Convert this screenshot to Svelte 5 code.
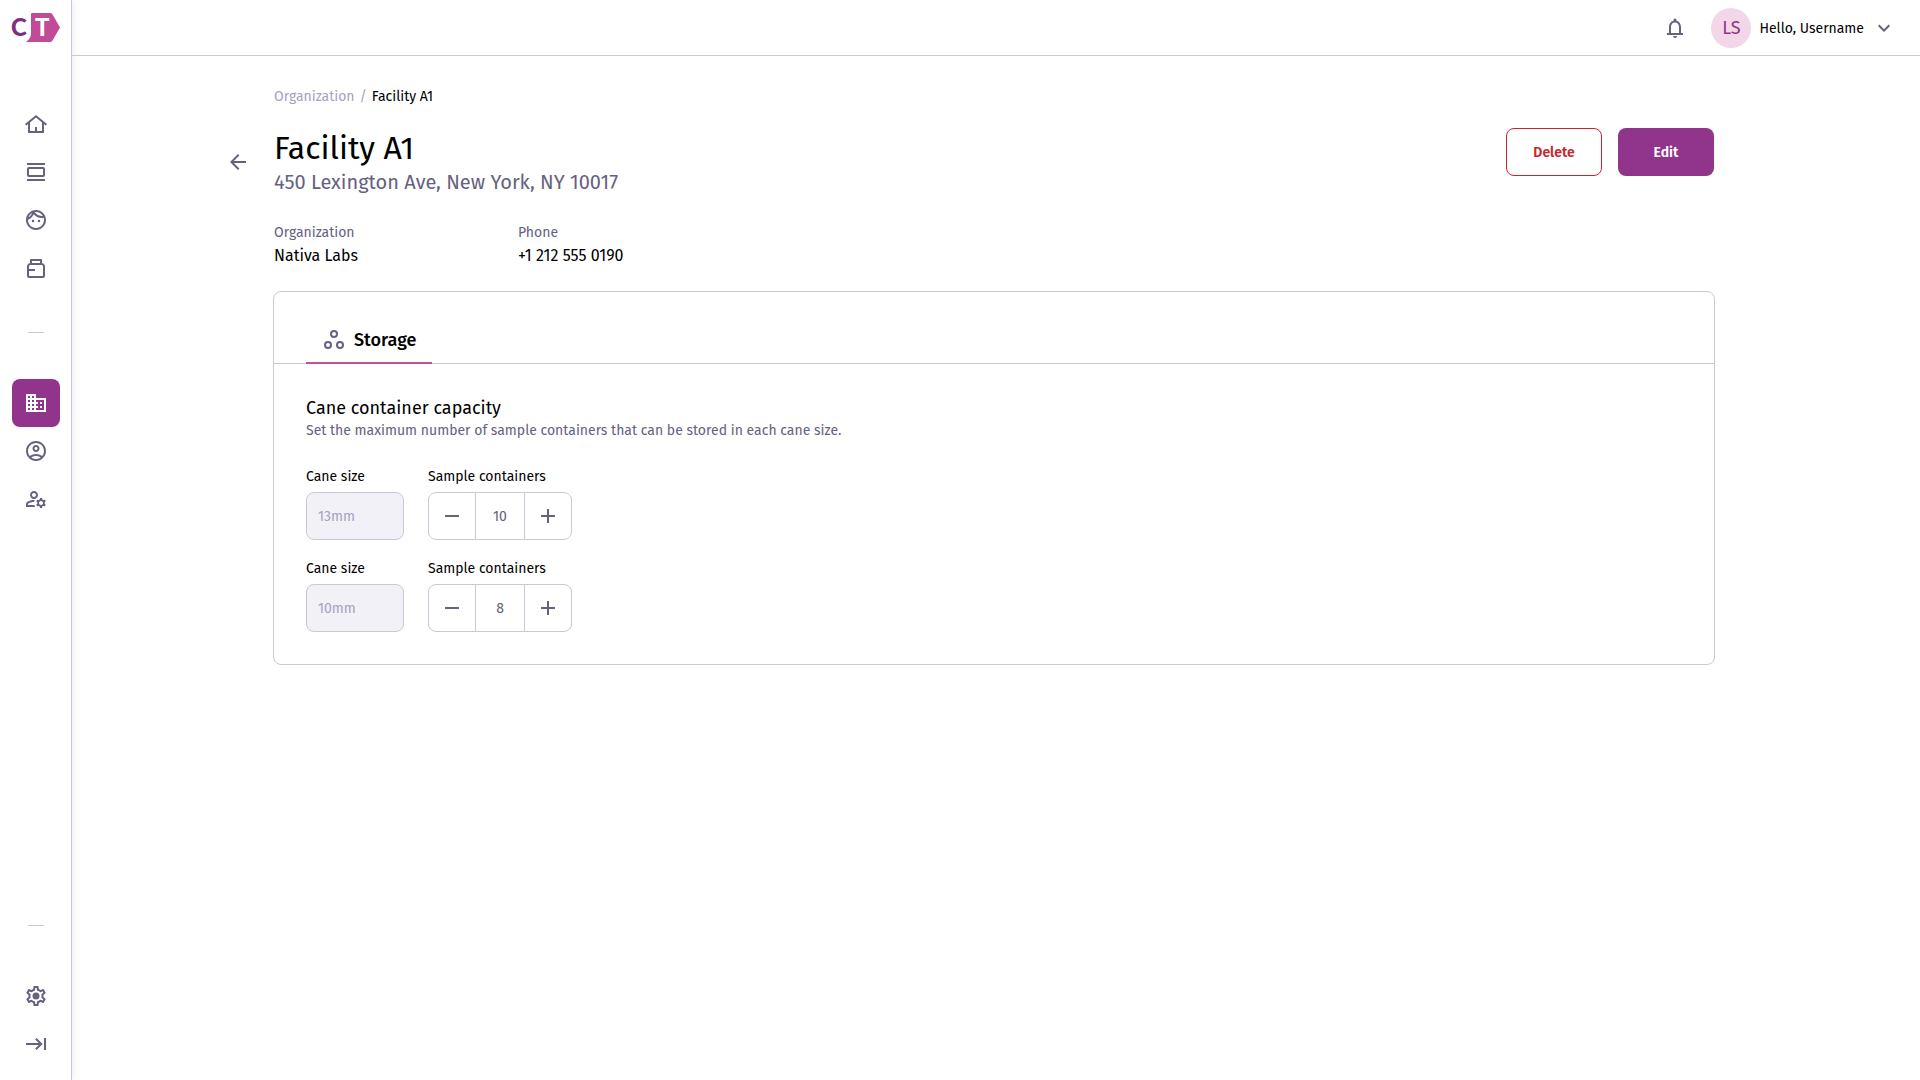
<script>
  const mainNav = [
    { label: "Home", icon: "home" },
    { label: "Tasks", icon: "carousel" },
    { label: "Patients", icon: "face" },
    { label: "Inventory", icon: "container" },
  ];
  const adminNav = [
    { label: "Facilities", icon: "building", active: true },
    { label: "Account", icon: "account" },
    { label: "User management", icon: "manage" },
  ];
  const details = [
    { term: "Organization", value: "Nativa Labs" },
    { term: "Phone", value: "+1 212 555 0190" },
  ];

  let canes = $state([
    { size: "13mm", count: 10 },
    { size: "10mm", count: 8 },
  ]);

  const icons = {
    home: "M12 3 1 12l1.3 1.5L4 12.1V21h16v-8.900l1.700 1.400L23 12 12 3zM6 19v-8.500l6-4.900 6 4.900V19h-5v-4h-2v4H6z",
    carousel: "M3 3h18v2H3V3zm0 16h18v2H3v-2zM5 7h14a2 2 0 0 1 2 2v6a2 2 0 0 1-2 2H5a2 2 0 0 1-2-2V9a2 2 0 0 1 2-2zm0 2v6h14V9H5z",
    face: "M10.250 13a1.250 1.250 0 1 1-2.500 0 1.250 1.250 0 0 1 2.500 0zM15 11.750a1.250 1.250 0 1 0 0 2.500 1.250 1.250 0 0 0 0-2.500zM22 12c0 5.520-4.480 10-10 10S2 17.520 2 12 6.480 2 12 2s10 4.480 10 10zM10.660 4.120C12.060 6.440 14.600 8 17.500 8c.46 0 .91-.05 1.340-.12C17.440 5.560 14.900 4 12 4c-.46 0-.91.05-1.340.12zM4.420 9.470c1.710-.97 3.030-2.550 3.660-4.440C6.370 6 5.050 7.580 4.420 9.470zM20 12c0-.78-.12-1.530-.33-2.240-.7.15-1.420.24-2.170.24-3.130 0-5.920-1.440-7.760-3.690C8.690 8.870 6.600 10.880 4 11.860c.01.04 0 .09 0 .14 0 4.410 3.590 8 8 8s8-3.590 8-8z",
    container: "M7 3h10a1 1 0 0 1 1 1v3c1.700.3 3 1.700 3 3.500V20a2 2 0 0 1-2 2H5a2 2 0 0 1-2-2V10.500C3 8.700 4.300 7.300 6 7V4a1 1 0 0 1 1-1zm1 2v2h8V5H8zM6.500 9C5.700 9 5 9.700 5 10.500V13h6v2H5v5h14V10.500c0-.8-.7-1.500-1.500-1.500h-11z",
    building: "M12 7V3H2v18h20V7H12zM6 19H4v-2h2v2zm0-4H4v-2h2v2zm0-4H4V9h2v2zm0-4H4V5h2v2zm4 12H8v-2h2v2zm0-4H8v-2h2v2zm0-4H8V9h2v2zm0-4H8V5h2v2zm10 12h-8v-2h2v-2h-2v-2h2v-2h-2V9h8v10zm-2-8h-2v2h2v-2zm0 4h-2v2h2v-2z",
    account: "M12 2C6.480 2 2 6.480 2 12s4.480 10 10 10 10-4.480 10-10S17.520 2 12 2zM7.350 18.500C8.660 17.560 10.260 17 12 17s3.340.56 4.650 1.500C15.340 19.440 13.740 20 12 20s-3.340-.56-4.650-1.500zm10.790-1.380C16.450 15.800 14.320 15 12 15s-4.450.8-6.140 2.120C4.700 15.730 4 13.950 4 12c0-4.420 3.580-8 8-8s8 3.580 8 8c0 1.950-.7 3.730-1.860 5.120zM12 6c-1.930 0-3.500 1.570-3.500 3.500S10.070 13 12 13s3.500-1.570 3.500-3.500S13.930 6 12 6zm0 5c-.83 0-1.500-.67-1.500-1.500S11.170 8 12 8s1.500.67 1.500 1.500S12.830 11 12 11z",
    manage: "M4 18v-.650c0-.340.16-.66.41-.81C6.100 15.530 8.030 15 10 15c.03 0 .05 0 .08.010.1-.700.300-1.370.590-1.980-.220-.020-.440-.030-.670-.030-2.420 0-4.680.670-6.610 1.820-.880.520-1.390 1.500-1.390 2.530V20h9.260c-.420-.600-.750-1.280-.970-2H4zM10 12c2.210 0 4-1.790 4-4s-1.790-4-4-4-4 1.790-4 4 1.790 4 4 4zm0-6c1.100 0 2 .9 2 2s-.9 2-2 2-2-.9-2-2 .9-2 2-2zM20.750 16c0-.22-.03-.42-.06-.63l1.140-1.010-1-1.730-1.450.490c-.320-.270-.680-.480-1.080-.630L18 11h-2l-.3 1.490c-.4.150-.760.360-1.080.630l-1.450-.490-1 1.730 1.140 1.010c-.03.21-.06.41-.06.63s.03.42.06.63l-1.140 1.010 1 1.730 1.450-.490c.320.270.680.480 1.080.630L16 21h2l.3-1.490c.4-.150.760-.360 1.080-.630l1.450.490 1-1.730-1.140-1.010c.03-.21.06-.41.06-.63zM17 18c-1.100 0-2-.9-2-2s.9-2 2-2 2 .9 2 2-.9 2-2 2z",
    settings: "M19.430 12.980c.04-.32.07-.64.07-.98s-.03-.66-.07-.98l2.110-1.650a.5.5 0 0 0 .12-.64l-2-3.460a.5.5 0 0 0-.61-.22l-2.490 1a7.300 7.300 0 0 0-1.690-.98l-.38-2.650A.49.49 0 0 0 14 2h-4a.49.49 0 0 0-.49.42l-.38 2.650c-.61.25-1.170.59-1.690.98l-2.490-1a.5.5 0 0 0-.61.22l-2 3.460a.49.49 0 0 0 .12.64l2.110 1.650c-.04.32-.07.65-.07.98s.03.66.07.98l-2.110 1.650a.5.5 0 0 0-.12.64l2 3.460c.12.22.39.300.61.22l2.490-1c.52.400 1.080.73 1.690.98l.38 2.650c.03.24.24.42.49.42h4c.25 0 .46-.18.49-.42l.38-2.650a7.300 7.300 0 0 0 1.690-.98l2.490 1c.23.09.49 0 .61-.22l2-3.460a.5.5 0 0 0-.12-.64l-2.110-1.650zm-1.980-1.710c.04.31.05.52.05.73s-.02.43-.05.73l-.14 1.130.89.700 1.080.84-.7 1.210-1.270-.51-1.040-.42-.9.68c-.43.32-.84.56-1.250.73l-1.060.43-.16 1.130-.2 1.350h-1.400l-.35-2.480-1.060-.43c-.43-.18-.83-.41-1.230-.71l-.91-.7-1.060.43-1.270.51-.7-1.210 1.080-.84.89-.7-.14-1.130a7 7 0 0 1 0-1.480l.14-1.130-.89-.7-1.080-.84.7-1.210 1.270.51 1.040.42.9-.68c.43-.32.84-.56 1.250-.73l1.060-.43.16-1.130.2-1.350h1.390l.35 2.480 1.060.43c.43.18.83.41 1.230.71l.91.7 1.060-.43 1.270-.51.7 1.210-1.070.85-.89.7.15 1.130zM12 8.500a3.500 3.500 0 1 0 0 7 3.500 3.500 0 0 0 0-7z",
    expand: "M12.600 6 11.200 7.400 14.800 11H2v2h12.800l-3.600 3.600 1.400 1.400 6-6-6-6zM20 6v12h2V6h-2z",
    bell: "M12 22a2 2 0 0 0 2-2h-4a2 2 0 0 0 2 2zM18 17v-6c0-3.070-1.630-5.640-4.500-6.320V4a1.500 1.500 0 0 0-3 0v.68C7.640 5.360 6 7.920 6 11v6H4v2h16v-2h-2zm-2 0H8v-6c0-2.480 1.510-4.500 4-4.500s4 2.020 4 4.500v6z",
    chevron: "M7.400 8.600 12 13.200l4.600-4.600L18 10l-6 6-6-6 1.400-1.400z",
    back: "M20 11H7.830l5.590-5.590L12 4l-8 8 8 8 1.410-1.410L7.830 13H20v-2z",
    minus: "M5 11h14v2H5z",
    plus: "M11 5h2v6h6v2h-6v6h-2v-6H5v-2h6z",
    storage: "M12 2a4 4 0 1 0 0 8 4 4 0 0 0 0-8zm0 2a2 2 0 1 1 0 4 2 2 0 0 1 0-4zM6 13a4 4 0 1 0 0 8 4 4 0 0 0 0-8zm0 2a2 2 0 1 1 0 4 2 2 0 0 1 0-4zM18 13a4 4 0 1 0 0 8 4 4 0 0 0 0-8zm0 2a2 2 0 1 1 0 4 2 2 0 0 1 0-4z",
  };
</script>

{#snippet icon(name)}
  <svg class="icon" viewBox="0 0 24 24" aria-hidden="true"><path d={icons[name]} fill-rule="evenodd" /></svg>
{/snippet}

{#snippet navItem(item)}
  <a class="nav-item" class:active={item.active} href="#{item.icon}" aria-label={item.label}>
    {@render icon(item.icon)}
  </a>
{/snippet}

<div class="app">
  <aside class="sidebar">
    <a class="logo" href="#home" aria-label="CT home">
      <svg viewBox="0 0 48 29" aria-hidden="true">
        <path d="M20 0h18a3 3 0 0 1 2.400 1.200L48 14.500 40.400 27.800A3 3 0 0 1 38 29H14c3.500-2.500 5-5 5-9V1a1 1 0 0 1 1-1z" fill="#c24b97" />
        <text x="-1" y="23" font-size="24" fill="#7f2f83">C</text>
        <text x="23" y="23" font-size="24" fill="#fff">T</text>
      </svg>
    </a>
    <nav class="nav" aria-label="Main">
      {#each mainNav as item}
        {@render navItem(item)}
      {/each}
      <hr />
      {#each adminNav as item}
        {@render navItem(item)}
      {/each}
    </nav>
    <div class="nav bottom">
      <hr />
      <a class="nav-item" href="#settings" aria-label="Settings">{@render icon("settings")}</a>
      <button class="nav-item" type="button" aria-label="Expand menu">{@render icon("expand")}</button>
    </div>
  </aside>

  <div class="page">
    <header class="topbar">
      <button class="icon-btn" type="button" aria-label="Notifications">{@render icon("bell")}</button>
      <button class="user" type="button">
        <span class="avatar">LS</span>
        <span class="user-name">Hello, Username</span>
        {@render icon("chevron")}
      </button>
    </header>

    <main>
      <div class="content">
        <nav class="breadcrumb" aria-label="Breadcrumb">
          <a href="#organization">Organization</a>
          <span>/</span>
          <span class="current" aria-current="page">Facility A1</span>
        </nav>

        <div class="heading">
          <a class="back" href="#organization" aria-label="Back">{@render icon("back")}</a>
          <div class="title">
            <h1>Facility A1</h1>
            <p>450 Lexington Ave, New York, NY 10017</p>
          </div>
          <div class="actions">
            <button class="btn danger" type="button">Delete</button>
            <button class="btn primary" type="button">Edit</button>
          </div>
        </div>

        <dl class="details">
          {#each details as detail}
            <div>
              <dt>{detail.term}</dt>
              <dd>{detail.value}</dd>
            </div>
          {/each}
        </dl>

        <section class="card">
          <div class="tabs" role="tablist">
            <button class="tab" type="button" role="tab" aria-selected="true">
              {@render icon("storage")}
              Storage
            </button>
          </div>
          <div class="panel" role="tabpanel">
            <h2>Cane container capacity</h2>
            <p class="hint">Set the maximum number of sample containers that can be stored in each cane size.</p>
            <div class="rows">
              {#each canes as cane, i}
                <div class="row">
                  <div class="field">
                    <label for="size-{i}">Cane size</label>
                    <input id="size-{i}" class="size" value={cane.size} disabled />
                  </div>
                  <div class="field">
                    <label for="count-{i}">Sample containers</label>
                    <div class="stepper">
                      <button type="button" aria-label="Decrease" onclick={() => cane.count--}>{@render icon("minus")}</button>
                      <input id="count-{i}" inputmode="numeric" bind:value={cane.count} />
                      <button type="button" aria-label="Increase" onclick={() => cane.count++}>{@render icon("plus")}</button>
                    </div>
                  </div>
                </div>
              {/each}
            </div>
          </div>
        </section>
      </div>
    </main>
  </div>
</div>

<style>
  :global(body) {
    margin: 0;
    background: #fff;
  }
  .app {
    --ink: #000;
    --muted: #65617f;
    --faint: #a6a2c0;
    --line: #c9c8d9;
    --purple: #91348c;
    --pink: #c05299;
    display: flex;
    min-height: 100vh;
    font-family: "Fira Sans", Roboto, sans-serif;
    font-size: 14px;
    line-height: 20px;
    color: var(--ink);
  }
  .app :is(a, button, input, div, aside, header) {
    box-sizing: border-box;
  }
  a {
    color: inherit;
    text-decoration: none;
  }
  button,
  input {
    padding: 0;
    border: none;
    background: none;
    font: inherit;
    color: inherit;
  }
  button {
    cursor: pointer;
  }
  h1,
  h2,
  p,
  dl,
  dd {
    margin: 0;
    font-weight: 400;
  }
  .icon {
    display: block;
    width: 24px;
    height: 24px;
    flex: none;
    fill: var(--muted);
  }
  .sidebar {
    display: flex;
    flex-direction: column;
    align-items: center;
    width: 72px;
    flex: none;
    padding: 13px 0 12px;
    border-right: 1px solid var(--line);
    box-shadow: 0 0 8px rgba(101, 97, 127, 0.14);
  }
  .logo svg {
    display: block;
    width: 48px;
    height: 29px;
    overflow: visible;
    font-family: Lato, sans-serif;
    font-weight: 900;
  }
  .nav {
    display: flex;
    flex-direction: column;
    align-items: center;
    margin-top: 58px;
  }
  .nav.bottom {
    margin-top: auto;
  }
  .nav hr {
    width: 16px;
    margin: 40px 0 46px;
    border: none;
    border-top: 1px solid var(--line);
  }
  .nav-item {
    display: flex;
    align-items: center;
    justify-content: center;
    width: 48px;
    height: 48px;
    border-radius: 8px;
  }
  .nav-item.active {
    background: var(--purple);
  }
  .nav-item.active .icon {
    fill: #fff;
  }
  .page {
    flex: 1;
    min-width: 0;
  }
  .topbar {
    display: flex;
    align-items: center;
    justify-content: flex-end;
    gap: 24px;
    height: 56px;
    padding-right: 24px;
    border-bottom: 1px solid var(--line);
  }
  .user {
    display: flex;
    align-items: center;
    gap: 8px;
  }
  .user-name {
    padding-top: 2px;
  }
  .avatar {
    width: 40px;
    border-radius: 50%;
    background: #f3d6e7;
    color: var(--purple);
    font-size: 18px;
    line-height: 40px;
  }
  main {
    padding: 31px 52px 40px 48px;
  }
  .content {
    max-width: 1440px;
    margin: 0 auto;
  }
  .breadcrumb {
    display: flex;
    gap: 5px;
    color: var(--faint);
  }
  .current {
    color: var(--ink);
  }
  .heading {
    display: flex;
    align-items: flex-start;
    margin-top: 21px;
  }
  .back {
    margin: 22px 24px 0 -48px;
  }
  .title {
    flex: 1;
  }
  h1 {
    font-size: 32px;
    line-height: 40px;
  }
  .title p {
    font-size: 20px;
    line-height: 28px;
    color: var(--muted);
  }
  .actions {
    display: flex;
    gap: 16px;
  }
  .btn {
    width: 96px;
    height: 48px;
    padding-top: 2px;
    border-radius: 8px;
    font-weight: 600;
  }
  .danger {
    border: 1px solid #c9252d;
    color: #c9252d;
  }
  .primary {
    background: var(--purple);
    color: #fff;
  }
  .details {
    display: flex;
    margin-top: 27px;
  }
  .details div {
    width: 244px;
  }
  dt {
    color: var(--muted);
  }
  dd {
    font-size: 16px;
    line-height: 26px;
  }
  .card {
    margin: 22px -1px 0;
    border: 1px solid var(--line);
    border-radius: 8px;
  }
  .tabs {
    display: flex;
    padding: 24px 32px 0;
    border-bottom: 1px solid var(--line);
  }
  .tab {
    display: flex;
    align-items: center;
    gap: 8px;
    height: 48px;
    padding: 2px 16px 0;
    margin-bottom: -1px;
    border-bottom: 2px solid var(--pink);
    font-size: 18px;
    font-weight: 500;
  }
  .panel {
    padding: 32px;
  }
  h2 {
    font-size: 18px;
    line-height: 24px;
  }
  .hint {
    margin-top: 1px;
    color: var(--muted);
  }
  .rows {
    display: grid;
    gap: 19px;
    margin-top: 26px;
  }
  .row {
    display: flex;
    gap: 24px;
  }
  .field label {
    display: block;
    margin-bottom: 5px;
  }
  .size {
    display: block;
    width: 98px;
    height: 48px;
    padding: 1px 11px 0;
    border: 1px solid var(--line);
    border-radius: 8px;
    background: #f2f1f7;
    color: var(--faint);
  }
  .stepper {
    display: flex;
    width: 144px;
    height: 48px;
    border: 1px solid var(--line);
    border-radius: 8px;
  }
  .stepper button {
    display: flex;
    align-items: center;
    justify-content: center;
    flex: 1;
  }
  .stepper input {
    width: 50px;
    padding-top: 1px;
    border: solid var(--line);
    border-width: 0 1px;
    text-align: center;
    color: var(--muted);
  }
</style>
